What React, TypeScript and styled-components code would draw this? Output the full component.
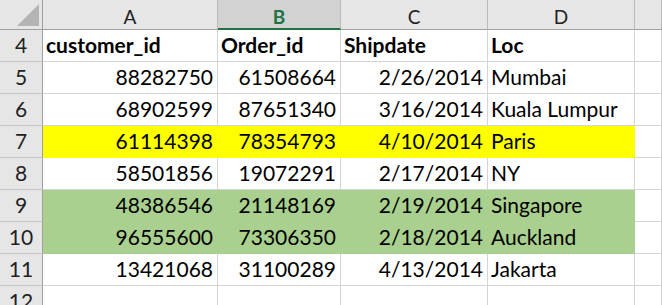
import { Fragment } from "react";
import styled, { createGlobalStyle } from "styled-components";

const GlobalStyle = createGlobalStyle`
  html, body {
    margin: 0;
    padding: 0;
    background: #ffffff;
    overflow: hidden;
  }
  body {
    font-family: "Lato", "Liberation Sans", sans-serif;
  }
`;

const Sheet = styled.div`
  display: grid;
  grid-template-columns: 43px 175px 123px 147px 147px 1fr;
  grid-auto-rows: 32px;
  grid-template-rows: 30px;
  width: 662px;
  height: 305px;
  overflow: hidden;
`;

const Corner = styled.div`
  position: relative;
  background: #e6e6e6;
  border-right: 1px solid #9f9f9f;
  border-bottom: 1px solid #9f9f9f;
  box-sizing: border-box;
  &::after {
    content: "";
    position: absolute;
    right: 3px;
    bottom: 3px;
    width: 0;
    height: 0;
    border-left: 22px solid transparent;
    border-bottom: 22px solid #b4b4b4;
  }
`;

const ColHead = styled.div<{ $active?: boolean }>`
  display: flex;
  align-items: center;
  justify-content: center;
  box-sizing: border-box;
  padding-top: 4px;
  background: ${(p) => (p.$active ? "#d2d2d2" : "#e6e6e6")};
  border-right: 1px solid #b9b9b9;
  border-bottom: ${(p) => (p.$active ? "2px solid #217346" : "1px solid #9f9f9f")};
  color: ${(p) => (p.$active ? "#217346" : "#222")};
  font-weight: ${(p) => (p.$active ? 700 : 400)};
  font-size: 19px;
`;

const RowHead = styled.div`
  display: flex;
  align-items: flex-end;
  justify-content: center;
  box-sizing: border-box;
  padding-bottom: 4px;
  background: #e6e6e6;
  border-right: 1px solid #9f9f9f;
  border-bottom: 1px solid #c6c6c6;
  color: #222;
  font-size: 21px;
`;

const Cell = styled.div<{ $fill?: string; $num?: boolean; $bold?: boolean }>`
  display: flex;
  align-items: flex-end;
  justify-content: ${(p) => (p.$num ? "flex-end" : "flex-start")};
  box-sizing: border-box;
  padding: 0 4px 4px 3px;
  background: ${(p) => p.$fill || "#fff"};
  border-right: 1px solid ${(p) => p.$fill || "#d4d4d4"};
  border-bottom: 1px solid ${(p) => p.$fill || "#d4d4d4"};
  font-size: 21px;
  font-weight: ${(p) => (p.$bold ? 700 : 400)};
  color: #000;
  white-space: nowrap;
`;

const YELLOW = "#ffff00";
const GREEN = "#a9d08e";

type Row = { n: number; cells: string[]; fill?: string; head?: boolean };

const rows: Row[] = [
  { n: 4, cells: ["customer_id", "Order_id", "Shipdate", "Loc"], head: true },
  { n: 5, cells: ["88282750", "61508664", "2/26/2014", "Mumbai"] },
  { n: 6, cells: ["68902599", "87651340", "3/16/2014", "Kuala Lumpur"] },
  { n: 7, cells: ["61114398", "78354793", "4/10/2014", "Paris"], fill: YELLOW },
  { n: 8, cells: ["58501856", "19072291", "2/17/2014", "NY"] },
  { n: 9, cells: ["48386546", "21148169", "2/19/2014", "Singapore"], fill: GREEN },
  { n: 10, cells: ["96555600", "73306350", "2/18/2014", "Auckland"], fill: GREEN },
  { n: 11, cells: ["13421068", "31100289", "4/13/2014", "Jakarta"] },
  { n: 12, cells: ["", "", "", ""] },
];

const cols = ["A", "B", "C", "D", ""];

export default function App() {
  return (
    <>
      <GlobalStyle />
      <Sheet>
        <Corner />
        {cols.map((c) => (
          <ColHead key={c || "E"} $active={c === "B"}>
            {c}
          </ColHead>
        ))}
        {rows.map((r) => (
          <Fragment key={r.n}>
            <RowHead>{r.n}</RowHead>
            {r.cells.map((v, i) => (
              <Cell
                key={i}
                $fill={r.fill}
                $bold={r.head}
                $num={!r.head && i < 3}
              >
                {v}
              </Cell>
            ))}
            <Cell />
          </Fragment>
        ))}
      </Sheet>
    </>
  );
}
